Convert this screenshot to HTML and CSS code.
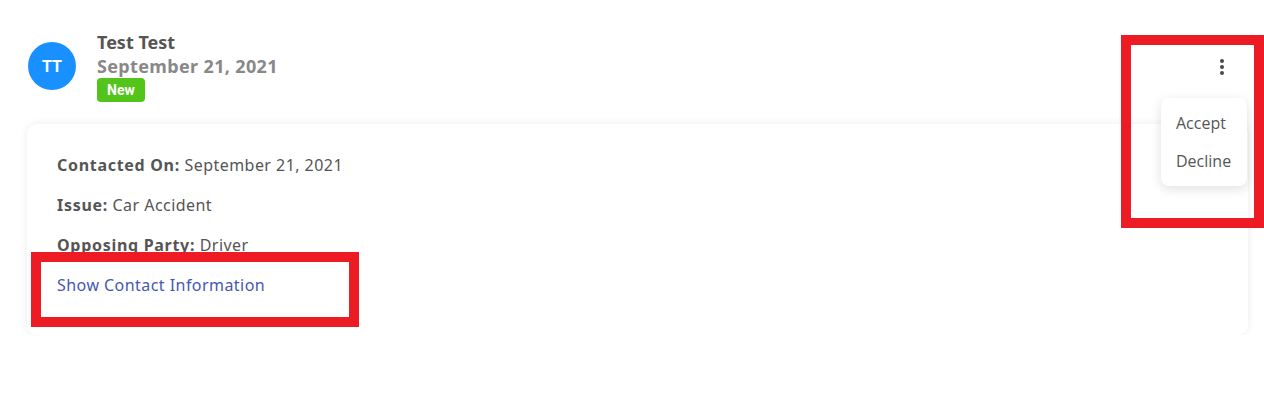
FILE: index.html
```html
<!DOCTYPE html>
<html>
<head>
  <link rel="stylesheet" href="styles.css">
</head>
<body>
  <div class="lead">
    <div class="lead-header">
      <div class="avatar">TT</div>
      <div class="lead-meta">
        <div class="lead-name">Test Test</div>
        <div class="lead-date">September 21, 2021</div>
        <span class="badge">New</span>
      </div>
      <div class="actions">
        <button class="kebab" aria-label="More">
          <svg width="6" height="18" viewBox="0 0 6 18"><circle cx="3" cy="3" r="2"/><circle cx="3" cy="9" r="2"/><circle cx="3" cy="15" r="2"/></svg>
        </button>
        <div class="menu">
          <div class="menu-item">Accept</div>
          <div class="menu-item">Decline</div>
        </div>
        <div class="mark mark-menu"></div>
      </div>
    </div>

    <div class="card">
      <div class="row"><b>Contacted On:</b> September 21, 2021</div>
      <div class="row"><b>Issue:</b> Car Accident</div>
      <div class="row"><b>Opposing Party:</b> Driver</div>
      <div class="row link-row">
        <a class="link" href="#">Show Contact Information</a>
        <div class="mark mark-link"></div>
      </div>
    </div>
  </div>
</body>
</html>
```

FILE: styles.css
```css
body {
  margin: 0;
  padding: 0;
  background: #fff;
  font-family: "Noto Sans", sans-serif;
  color: #555;
}

.lead {
  padding: 30px 16px 0 27px;
}

.lead-header {
  display: flex;
  align-items: flex-start;
  gap: 21px;
  height: 94px;
  position: relative;
}

.avatar {
  width: 48px;
  height: 48px;
  margin-top: 12px;
  margin-left: 1px;
  border-radius: 50%;
  background: #1890ff;
  color: #fff;
  font-family: Roboto, sans-serif;
  font-size: 16px;
  font-weight: 700;
  display: flex;
  align-items: center;
  justify-content: center;
}

.lead-meta {
  display: flex;
  flex-direction: column;
  align-items: flex-start;
  font-weight: 700;
  font-size: 18px;
  line-height: 24px;
}

.lead-name {
  color: #555;
}

.lead-date {
  color: #888;
  letter-spacing: 0.35px;
}

.badge {
  background: #52c41a;
  color: #fff;
  font-family: Roboto, sans-serif;
  font-size: 14px;
  line-height: 24px;
  padding: 0 10px;
  border-radius: 4px;
}

.actions {
  margin-left: auto;
  position: relative;
  width: 112px;
  height: 100%;
}

.kebab {
  position: absolute;
  top: 28px;
  right: 23px;
  background: none;
  border: none;
  padding: 0;
  fill: #454b55;
  cursor: pointer;
}

.menu {
  position: absolute;
  top: 68px;
  left: 25px;
  width: 86px;
  padding: 6px 0;
  background: #fff;
  border-radius: 8px;
  box-shadow: 0 3px 12px rgba(0, 0, 0, 0.12);
  z-index: 2;
  font-family: "Open Sans", sans-serif;
  font-size: 16px;
}

.menu-item {
  padding: 0 15px;
  line-height: 38px;
  color: #555;
}

.card {
  background: #fff;
  border-radius: 10px;
  box-shadow: 0 0 9px rgba(0, 0, 0, 0.08);
  padding: 21px 30px 30px;
  display: flex;
  flex-direction: column;
}

.row {
  font-size: 16px;
  line-height: 40px;
  letter-spacing: 0.45px;
  color: #555;
}

.row b {
  font-weight: 700;
  letter-spacing: 0.7px;
}

.link-row {
  position: relative;
}

.link {
  color: #4557b5;
  text-decoration: none;
}

.mark {
  position: absolute;
  border: 10px solid #ed1c24;
  z-index: 3;
  pointer-events: none;
}

.mark-menu {
  top: 5px;
  left: -15px;
  width: 123px;
  height: 173px;
}

.mark-link {
  top: -13px;
  left: -26px;
  width: 308px;
  height: 55px;
}
```
